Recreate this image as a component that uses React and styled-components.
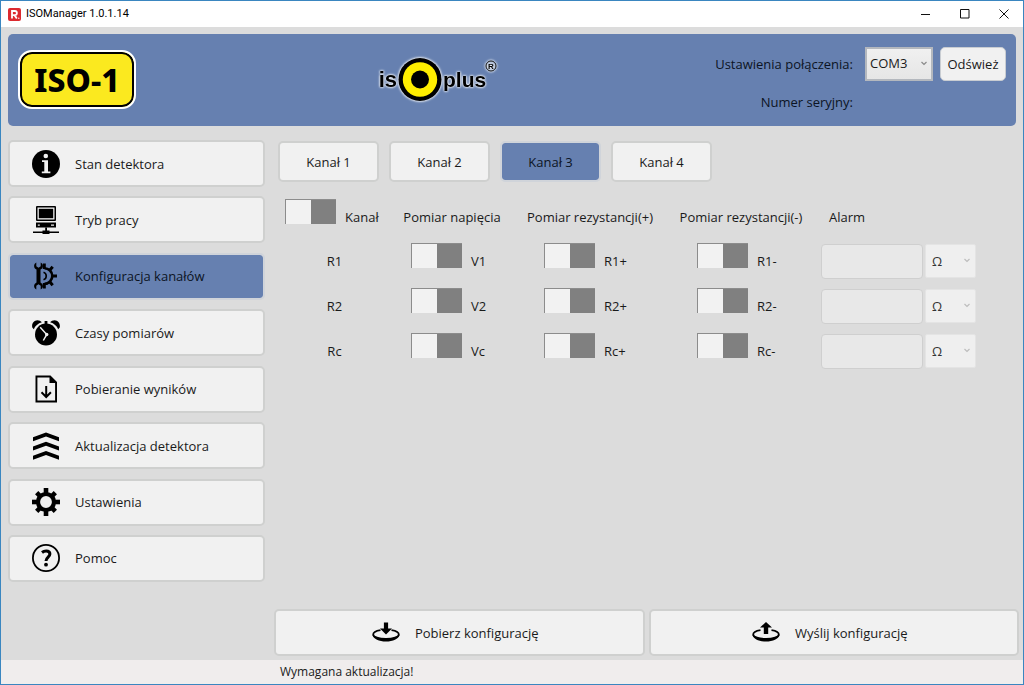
import React, { useState } from "react";
import styled, { createGlobalStyle } from "styled-components";

const GlobalStyle = createGlobalStyle`
  * {
    box-sizing: border-box;
    margin: 0;
    padding: 0;
  }
  body, button, input, select {
    font-family: "Open Sans", "Noto Sans", sans-serif;
    font-size: 13px;
    line-height: 20px;
    color: #1a1a1a;
  }
`;

const Window = styled.div`
  min-height: 100vh;
  display: flex;
  flex-direction: column;
  background: #dcdcdc;
  border: 1px solid #3a86c0;
`;

const TitleBar = styled.div`
  display: flex;
  align-items: center;
  height: 26px;
  padding-left: 7px;
  background: #fff;
`;

const Title = styled.h1`
  flex: 1;
  margin-left: 5px;
  font-family: Roboto, "Open Sans", sans-serif;
  font-size: 11px;
  font-weight: 400;
  color: #000;
`;

const WindowButton = styled.button`
  display: flex;
  justify-content: center;
  align-items: center;
  width: 39px;
  height: 26px;
  border: none;
  background: none;
`;

const Header = styled.header`
  display: flex;
  align-items: flex-start;
  height: 92px;
  margin: 7px 7px 0;
  padding: 13px 10px 0;
  border-radius: 5px;
  background: #6680b0;
`;

const Badge = styled.div`
  display: flex;
  justify-content: center;
  align-items: center;
  width: 118px;
  height: 59px;
  margin-top: 3px;
  border: 2px solid #fff;
  border-radius: 14px;
  box-shadow: inset 0 0 0 2px #000;
  background: #fbe91f;
  color: #000;
  font-family: "Noto Sans", sans-serif;
  font-size: 32px;
  font-weight: 800;
`;

const LogoSlot = styled.div`
  flex: 1;
  display: flex;
  justify-content: center;
  padding-left: 24px;
`;

const Logo = styled.svg`
  overflow: visible;
  font-family: "Liberation Sans Narrow", "Liberation Sans", sans-serif;
  font-weight: 700;
  filter: drop-shadow(0 0 1px #fff) drop-shadow(0 0 1px #dfe5f0);
`;

const Connection = styled.div`
  display: grid;
  grid-template-columns: auto auto;
  grid-template-rows: 34px 20px;
  gap: 11px 12px;
  align-items: center;
  justify-items: end;
  color: #0c1424;
`;

const ConnectionControls = styled.div`
  display: flex;
  gap: 7px;
`;

const SelectBox = styled.div`
  position: relative;
  width: ${({ $width }) => $width};
  height: 34px;
`;

const Select = styled.select`
  appearance: none;
  width: 100%;
  height: 100%;
  padding: 0 4px 2px 3px;
  border: 2px solid #b4b8be;
  background: linear-gradient(#f0f0f0, #e6e6e6);
  font-size: 13px;
  opacity: 1;

  &:disabled {
    padding: 0 6px;
    border: 1px solid #e4e4e4;
    border-radius: 2px;
    background: #efefef;
    color: #333;
  }
`;

const SelectArrow = styled.svg`
  position: absolute;
  right: 6px;
  top: 14px;
  pointer-events: none;
`;

const RefreshButton = styled.button`
  width: 66px;
  height: 34px;
  border: 1px solid #c9cdd2;
  border-radius: 5px;
  background: #f1f1f1;
`;

const Main = styled.div`
  flex: 1;
  display: flex;
  gap: 9px;
  padding: 14px 4px 4px 7px;
`;

const Sidebar = styled.nav`
  flex: none;
  display: flex;
  flex-direction: column;
  justify-content: space-between;
  width: 257px;
  padding-bottom: 74px;
`;

const PanelButton = styled.button`
  display: flex;
  align-items: center;
  height: 47px;
  gap: 15px;
  border: 2px solid ${({ $active }) => ($active ? "#d0d4da" : "#cfd0cf")};
  border-radius: 5px;
  background: ${({ $active }) => ($active ? "#6680b0" : "#f1f1f1")};
  background-clip: ${({ $active }) => ($active ? "padding-box" : "border-box")};
  color: ${({ $active }) => ($active ? "#0c1424" : "#1a1a1a")};
`;

const NavButton = styled(PanelButton)`
  padding: 0 22px;
`;

const ActionButton = styled(PanelButton)`
  flex: 1;
  justify-content: center;
  padding-right: 8px;
`;

const Content = styled.main`
  flex: 1;
  display: flex;
  flex-direction: column;
`;

const Tabs = styled.div`
  display: flex;
  gap: 10px;
  padding: 1px 4px 0;
`;

const Tab = styled(PanelButton)`
  justify-content: center;
  width: 101px;
  height: 41px;
`;

const Table = styled.table`
  table-layout: fixed;
  width: 704px;
  margin: 17px 0 0 4px;
  border-collapse: collapse;

  th, td {
    font-weight: 400;
    vertical-align: top;
  }
`;

const HeadRow = styled.tr`
  height: 44px;
`;

const Row = styled.tr`
  height: 45px;
`;

const HeadCell = styled.th`
  padding: 8px 0 0 ${({ $indent }) => $indent || "0"};
  text-align: ${({ $indent }) => ($indent ? "left" : "center")};
  white-space: nowrap;
`;

const Cell = styled.td`
  padding-left: ${({ $indent }) => $indent};
`;

const SwitchLabel = styled.label`
  display: flex;
  align-items: flex-end;
  gap: 9px;
  height: 28px;
`;

const Switch = styled.input`
  appearance: none;
  align-self: flex-start;
  width: 51px;
  height: 25px;
  border: solid #8c8c8c;
  border-width: 1px 0 0 1px;
  background: linear-gradient(to right, #f2f2f2 50%, #808080 50%);

  &:checked {
    background: linear-gradient(to right, #6680b0 50%, #f2f2f2 50%);
  }
`;

const AlarmFields = styled.div`
  display: flex;
  gap: 2px;
  padding-top: 1px;
`;

const AlarmInput = styled.input`
  width: 102px;
  height: 35px;
  padding: 0 6px;
  border: 1px solid #cfcfcf;
  border-radius: 4px;
  background: #e8e8e8;
`;

const Actions = styled.div`
  display: flex;
  gap: 4px;
  margin-top: auto;
`;

const StatusBar = styled.footer`
  height: 24px;
  padding: 2px 0 0 279px;
  background: #f0eded;
  font-size: 12px;
`;

const Icon = ({ children }) => (
  <svg width="28" height="28" viewBox="0 0 28 28" fill="#000" aria-hidden="true">
    {children}
  </svg>
);

const InfoIcon = () => (
  <Icon>
    <circle cx="14" cy="14" r="14" />
    <circle cx="13.8" cy="6" r="2.3" fill="#f1f1f1" />
    <path d="M10 10.3h6v11.2h2.4v1.7H9.8v-1.7h2.5v-9.5H10z" fill="#f1f1f1" />
  </Icon>
);

const ComputerIcon = () => (
  <Icon>
    <path fillRule="evenodd" d="M5 0h18a1 1 0 0 1 1 1v13a1 1 0 0 1-1 1H5a1 1 0 0 1-1-1V1a1 1 0 0 1 1-1zM5.5 1.6v11.8h17V1.6z" />
    <rect x="6.8" y="2.8" width="14.4" height="9.4" />
    <path fillRule="evenodd" d="M4 16.5h20v5H4zM5.8 18.4v1.3h2v-1.3zM19 18.4v1.3h3v-1.3z" />
    <path d="M13.2 21.5h1.8v3h2.5v1.1H27v1.5h-9.5v1h-7v-1H1v-1.5h9.5v-1.1h2.7z" />
  </Icon>
);

const WrenchGearIcon = () => (
  <Icon>
    <path d="M4.3.5v3.800l2.200 1.500 2.200-1.500V.5c1.500.8 2.200 2 2.200 3.500 0 1.600-.9 2.900-2.400 3.600v12.800c1.500.7 2.400 2 2.400 3.600 0 1.500-.7 2.700-2.200 3.500v-3.800l-2.200-1.500-2.200 1.500v3.800C2.800 26.700 2.100 25.500 2.100 24c0-1.600.9-2.900 2.400-3.600V7.600C3 6.900 2.100 5.600 2.100 4 2.100 2.500 2.800 1.300 4.300.5z" />
    <g fill="none" stroke="#000">
      <path d="M12.500 6.200a7.800 7.800 0 0 1 0 15.600" strokeWidth="2.600" />
      <path d="M11.500 10.200a4 4 0 0 1 0 7.600" strokeWidth="1.600" />
      <path d="M12.300 7V1.500M12.300 21v5.500M17.500 8.500l3.200-3.700M17.500 19.500l3.200 3.700M20 14h5" strokeWidth="3" />
    </g>
  </Icon>
);

const AlarmIcon = () => (
  <Icon>
    <circle cx="14" cy="15.500" r="11" />
    <path d="M.3 8.500C-.6 4.500 2 1.300 5.300 1.200c2 0 3.500.8 4.600 2.100C6 4.500 3.200 6.900 1.800 10.200zM27.700 8.500c.9-4-1.700-7.200-5-7.300-2 0-3.500.8-4.600 2.100 3.900 1.200 6.700 3.600 8.100 6.900z" />
    <path d="M12.600 2h2.800v4h-2.800z" />
    <path d="M8.200 8.300l6.500 7.200-3.400 6" fill="none" stroke="#f1f1f1" strokeWidth="1.500" />
    <circle cx="14.700" cy="15.500" r="1.700" fill="#f1f1f1" />
  </Icon>
);

const FileDownIcon = () => (
  <Icon>
    <path fillRule="evenodd" d="M3.500.5h15l6.500 6.500v20.500h-21.500zM5.400 2.400v23.200h17.700V8h-5.600V2.400z" />
    <path d="M14.200 11v10.500M9.500 17.300l4.700 4.700 4.700-4.700" fill="none" stroke="#000" strokeWidth="2" />
  </Icon>
);

const ChevronsIcon = () => (
  <Icon>
    <path d="M1 5.300L14 .5l13 4.800v4L14 4.500 1 9.300zM1 14.500l13-4.800 13 4.800v4l-13-4.800-13 4.800zM1 23.700l13-4.800 13 4.800v4l-13-4.800-13 4.800z" />
  </Icon>
);

const GearIcon = () => (
  <Icon>
    <circle cx="14" cy="14" r="8" fill="none" stroke="#000" strokeWidth="4.200" />
    {[0, 45, 90, 135, 180, 225, 270, 315].map((angle) => (
      <rect
        key={angle}
        x="11.700"
        y={angle % 90 ? 0.8 : 0}
        width="4.600"
        height="5.500"
        transform={`rotate(${angle} 14 14)`}
      />
    ))}
  </Icon>
);

const HelpIcon = () => (
  <Icon>
    <circle cx="14" cy="14" r="13.100" fill="none" stroke="#000" strokeWidth="1.800" />
    <path d="M10 8.500c1.200-1 2.600-1.500 4.200-1.500 2.500 0 3.700 1.300 3.700 3 0 3-3.900 3.200-3.900 7" fill="none" stroke="#000" strokeWidth="3" />
    <circle cx="14" cy="20.700" r="1.900" />
  </Icon>
);

const DiscIcon = ({ up }) => (
  <Icon>
    <path d="M8.500 11.100C4 11.800 1.200 13.500 1.200 15.500c0 2.600 5.700 4.500 12.800 4.500s12.800-1.900 12.800-4.500c0-2-2.800-3.700-7.300-4.400" fill="none" stroke="#000" strokeWidth="1.800" />
    <path d="M.5 16c1 4 6.500 6.500 13.500 6.500S26.500 20 27.500 16c-2.500 2.700-7.300 3.600-13.500 3.600S3 18.700.5 16z" />
    {up ? (
      <path d="M14 3l6 5.500h-3.800V15h-4.400V8.500H8z" />
    ) : (
      <path d="M11.900 3.500h4.200V9.500h3.900L14 15.500 8 9.500h3.900z" />
    )}
  </Icon>
);

const navItems = [
  { label: "Stan detektora", icon: <InfoIcon /> },
  { label: "Tryb pracy", icon: <ComputerIcon /> },
  { label: "Konfiguracja kanałów", icon: <WrenchGearIcon /> },
  { label: "Czasy pomiarów", icon: <AlarmIcon /> },
  { label: "Pobieranie wyników", icon: <FileDownIcon /> },
  { label: "Aktualizacja detektora", icon: <ChevronsIcon /> },
  { label: "Ustawienia", icon: <GearIcon /> },
  { label: "Pomoc", icon: <HelpIcon /> },
];

const tabs = ["Kanał 1", "Kanał 2", "Kanał 3", "Kanał 4"];

const rows = [
  { name: "R1", voltage: "V1" },
  { name: "R2", voltage: "V2" },
  { name: "Rc", voltage: "Vc" },
];

const Toggle = ({ label }) => (
  <SwitchLabel>
    <Switch type="checkbox" />
    {label}
  </SwitchLabel>
);

const Dropdown = ({ width, label, value, disabled }) => (
  <SelectBox $width={width}>
    <Select aria-label={label} disabled={disabled}>
      <option>{value}</option>
    </Select>
    <SelectArrow width="6" height="5" viewBox="0 0 6 5" fill="none" stroke={disabled ? "#bdbdbd" : "#8a8a8a"}>
      <path d="M.5 1L3 3.500 5.500 1" strokeWidth="1.200" />
    </SelectArrow>
  </SelectBox>
);

const App = () => {
  const [page, setPage] = useState("Konfiguracja kanałów");
  const [tab, setTab] = useState("Kanał 3");

  return (
    <Window>
      <GlobalStyle />
      <TitleBar>
        <svg width="13" height="13" viewBox="0 0 13 13" aria-hidden="true">
          <rect width="13" height="13" rx="2" fill="#dc2a2f" />
          <path d="M4 10.500V3h2.800a2 2 0 0 1 0 4.200H4M6.500 7.200l2.300 3.300" fill="none" stroke="#fff" strokeWidth="1.800" />
          <circle cx="10.800" cy="10.300" r=".7" fill="#fff" />
        </svg>
        <Title>ISOManager 1.0.1.14</Title>
        <WindowButton aria-label="Minimalizuj">
          <svg width="10" height="10" stroke="#111"><path d="M0 5.500h9" /></svg>
        </WindowButton>
        <WindowButton aria-label="Maksymalizuj">
          <svg width="10" height="10" stroke="#111" fill="none"><path d="M.5.5h8.500v8.500H.5z" /></svg>
        </WindowButton>
        <WindowButton aria-label="Zamknij">
          <svg width="10" height="10" stroke="#111"><path d="M.5.5l9 9M9.500.5l-9 9" /></svg>
        </WindowButton>
      </TitleBar>

      <Header>
        <Badge>ISO-1</Badge>
        <LogoSlot>
          <Logo width="118" height="64" viewBox="0 0 118 64">
            <text x="18" y="40" fontSize="22" textAnchor="end">is</text>
            <circle cx="41" cy="32.500" r="21.500" />
            <circle cx="41" cy="32.500" r="17.200" fill="#ffee00" />
            <circle cx="41" cy="32.500" r="9" />
            <text x="64" y="40" fontSize="21">plus</text>
            <circle cx="112" cy="19" r="5" fill="none" stroke="#111" />
            <text x="112" y="22" fontSize="8" textAnchor="middle">R</text>
          </Logo>
        </LogoSlot>
        <Connection>
          <span>Ustawienia połączenia:</span>
          <ConnectionControls>
            <Dropdown width="68px" label="Ustawienia połączenia" value="COM3" />
            <RefreshButton>Odśwież</RefreshButton>
          </ConnectionControls>
          <span>Numer seryjny:</span>
        </Connection>
      </Header>

      <Main>
        <Sidebar>
          {navItems.map(({ label, icon }) => (
            <NavButton key={label} $active={label === page} onClick={() => setPage(label)}>
              {icon}
              {label}
            </NavButton>
          ))}
        </Sidebar>

        <Content>
          <Tabs>
            {tabs.map((name) => (
              <Tab key={name} $active={name === tab} onClick={() => setTab(name)}>
                {name}
              </Tab>
            ))}
          </Tabs>

          <Table>
            <colgroup>
              <col width="113" />
              <col width="122" />
              <col width="154" />
              <col width="148" />
              <col />
            </colgroup>
            <thead>
              <HeadRow>
                <Cell as="th" $indent="7px">
                  <Toggle label="Kanał" />
                </Cell>
                <HeadCell>Pomiar napięcia</HeadCell>
                <HeadCell>Pomiar rezystancji(+)</HeadCell>
                <HeadCell>Pomiar rezystancji(-)</HeadCell>
                <HeadCell $indent="14px">Alarm</HeadCell>
              </HeadRow>
            </thead>
            <tbody>
              {rows.map(({ name, voltage }) => (
                <Row key={name}>
                  <HeadCell scope="row">{name}</HeadCell>
                  <Cell $indent="20px">
                    <Toggle label={voltage} />
                  </Cell>
                  <Cell $indent="31px">
                    <Toggle label={`${name}+`} />
                  </Cell>
                  <Cell $indent="30px">
                    <Toggle label={`${name}-`} />
                  </Cell>
                  <Cell $indent="6px">
                    <AlarmFields>
                      <AlarmInput type="text" aria-label={`Alarm ${name}`} disabled />
                      <Dropdown width="51px" label={`Jednostka ${name}`} value="Ω" disabled />
                    </AlarmFields>
                  </Cell>
                </Row>
              ))}
            </tbody>
          </Table>

          <Actions>
            <ActionButton>
              <DiscIcon />
              Pobierz konfigurację
            </ActionButton>
            <ActionButton>
              <DiscIcon up />
              Wyślij konfigurację
            </ActionButton>
          </Actions>
        </Content>
      </Main>

      <StatusBar>Wymagana aktualizacja!</StatusBar>
    </Window>
  );
};

export default App;
